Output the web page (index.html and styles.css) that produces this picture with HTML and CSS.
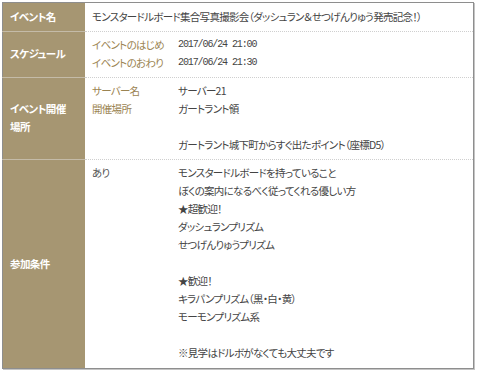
FILE: index.html
```html
<!DOCTYPE html>
<html lang="ja">
<head>
<meta charset="utf-8">
<link rel="stylesheet" href="styles.css">
</head>
<body>
<table class="info">
  <tr>
    <th>イベント名</th>
    <td>モンスタードルボード集合写真撮影会（ダッシュラン＆せつげんりゅう発売記念！）</td>
  </tr>
  <tr>
    <th>スケジュール</th>
    <td>
      <div class="pairs">
        <span class="label">イベントのはじめ</span><span class="date">2017/06/24 21:00</span>
        <span class="label">イベントのおわり</span><span class="date">2017/06/24 21:30</span>
      </div>
    </td>
  </tr>
  <tr>
    <th>イベント開催<br>場所</th>
    <td>
      <div class="pairs">
        <span class="label">サーバー名</span><span>サーバー21</span>
        <span class="label">開催場所</span><span>ガートラント領<br><br>ガートラント城下町からすぐ出たポイント（座標D5）</span>
      </div>
    </td>
  </tr>
  <tr>
    <th>参加条件</th>
    <td>
      <div class="pairs">
        <span class="plain">あり</span><span>モンスタードルボードを持っていること<br>ぼくの案内になるべく従ってくれる優しい方<br>★超歓迎！<br>ダッシュランプリズム<br>せつげんりゅうプリズム<br><br>★歓迎！<br>キラパンプリズム（黒・白・黄）<br>モーモンプリズム系<br><br>※見学はドルボがなくても大丈夫です</span>
      </div>
    </td>
  </tr>
</table>
</body>
</html>
```

FILE: styles.css
```css
html, body {
  margin: 0;
  padding: 0;
  background: #ffffff;
}
body {
  padding: 2px;
  font-family: "Noto Sans CJK JP", "Noto Sans", sans-serif;
  font-size: 10.5px;
  line-height: 18px;
  color: #444444;
  font-feature-settings: "palt";
}
.info {
  width: 472px;
  border-collapse: collapse;
  border: 1px solid #8e8e8e;
  box-shadow: 1px 1px 0 #c4c4c4;
}
.info th {
  width: 75px;
  background: #a69672;
  color: #ffffff;
  font-weight: bold;
  text-align: left;
  vertical-align: middle;
  padding: 4px 0 5px 7px;
  border-top: 1px solid #c4bba8;
  letter-spacing: -0.6px;
}
.info td {
  padding: 4px 0 5px 7px;
  vertical-align: top;
  border-top: 1px dotted #cfcfcf;
  letter-spacing: -0.7px;
}
.info tr:first-child th,
.info tr:first-child td {
  border-top: none;
  padding-top: 5px;
}
.info tr:last-child td {
  padding-bottom: 6px;
}
.pairs {
  display: grid;
  grid-template-columns: 86px 1fr;
}
.label {
  color: #9b8452;
}
.plain {
  color: #555555;
}
.date {
  font-family: "Liberation Mono", monospace;
  font-size: 10px;
  letter-spacing: -1.1px;
  color: #444444;
}
```
